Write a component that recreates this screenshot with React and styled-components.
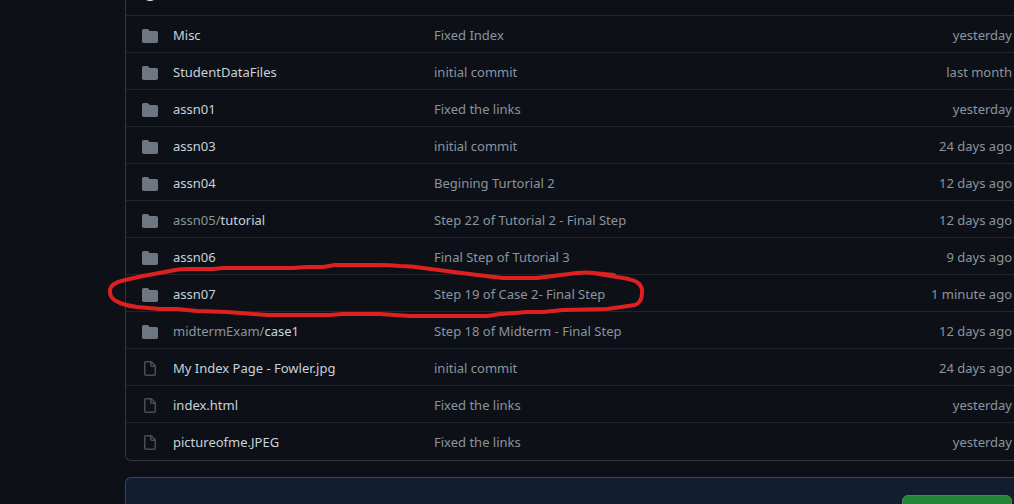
import React from "react";
import styled, { createGlobalStyle } from "styled-components";

const Global = createGlobalStyle`
  * { box-sizing: border-box; }
  body {
    margin: 0;
    background: #0d1117;
    color: #c9d1d9;
    font-family: "Segoe UI", "Noto Sans", "Open Sans", sans-serif;
    font-size: 13px;
    line-height: 20px;
  }
`;

const Page = styled.main`
  position: relative;
  display: flex;
  flex-direction: column;
  gap: 16px;
  height: 100vh;
  overflow: hidden;
  padding-left: 125px;
`;

const FileBox = styled.section`
  flex: none;
  padding-bottom: 1px;
  border: 1px solid #30363d;
  border-width: 0 0 1px 1px;
  border-bottom-left-radius: 6px;
`;

const CommitBar = styled.header`
  display: flex;
  align-items: flex-end;
  height: 15px;
  padding: 0 16px 14px;
`;

const Avatar = styled.span`
  flex: none;
  width: 16px;
  height: 16px;
  border-radius: 50%;
  background: #e6e8ea;
`;

const Table = styled.table`
  width: 100%;
  table-layout: fixed;
  border-collapse: separate;
  border-spacing: 0;
`;

const Cell = styled.td`
  height: 37px;
  padding: ${(p) => p.$pad || "2px 0 0"};
  width: ${(p) => p.$width || "auto"};
  border-top: 1px solid #21262d;
  color: #8b949e;
  text-align: ${(p) => p.$align || "left"};
  white-space: nowrap;
`;

const Icon = styled.svg`
  display: block;
  width: 16px;
  height: 16px;
  fill: ${(p) => p.$color};
`;

const NameLink = styled.a`
  color: #c9d1d9;
  text-decoration: none;
`;

const MessageLink = styled.a`
  color: #8b949e;
  text-decoration: none;
`;

const Parent = styled.span`
  color: #8b949e;
`;

const Banner = styled.section`
  flex: none;
  display: flex;
  justify-content: flex-end;
  padding: 17px 2px 17px 16px;
  border: 1px solid #264a7c;
  border-right: 0;
  border-top-left-radius: 6px;
  background: #121d2f;
`;

const GreenButton = styled.button`
  width: 110px;
  height: 32px;
  border: 1px solid #3a9249;
  border-radius: 6px;
  background: #238636;
`;

const Marker = styled.svg`
  position: absolute;
  left: 100px;
  top: 255px;
  width: 560px;
  height: 70px;
  fill: none;
  stroke: #df2020;
  stroke-width: 4;
  stroke-linecap: round;
  stroke-linejoin: round;
  pointer-events: none;
`;

const FOLDER =
  "M1.75 1A1.75 1.75 0 000 2.75v10.5C0 14.216.784 15 1.75 15h12.5A1.75 1.75 0 0016 13.25v-8.5A1.75 1.75 0 0014.25 3h-6.5a.25.25 0 01-.2-.1l-.9-1.2c-.33-.44-.85-.7-1.4-.7h-3.5z";
const FILE =
  "M3.75 1.5a.25.25 0 00-.25.25v11.5c0 .138.112.25.25.25h8.5a.25.25 0 00.25-.25V6H9.75A1.75 1.75 0 018 4.25V1.5H3.75zm5.75.56v2.19c0 .138.112.25.25.25h2.19L9.5 2.06zM2 1.75C2 .784 2.784 0 3.75 0h5.086c.464 0 .909.184 1.237.513l3.414 3.414c.329.328.513.773.513 1.237v8.086A1.75 1.75 0 0112.25 15h-8.5A1.75 1.75 0 012 13.25V1.75z";

const entries = [
  { name: "Misc", message: "Fixed Index", age: "yesterday" },
  { name: "StudentDataFiles", message: "initial commit", age: "last month" },
  { name: "assn01", message: "Fixed the links", age: "yesterday" },
  { name: "assn03", message: "initial commit", age: "24 days ago" },
  { name: "assn04", message: "Begining Turtorial 2", age: "12 days ago" },
  { parent: "assn05/", name: "tutorial", message: "Step 22 of Tutorial 2 - Final Step", age: "12 days ago" },
  { name: "assn06", message: "Final Step of Tutorial 3", age: "9 days ago" },
  { name: "assn07", message: "Step 19 of Case 2- Final Step", age: "1 minute ago" },
  { parent: "midtermExam/", name: "case1", message: "Step 18 of Midterm - Final Step", age: "12 days ago" },
  { file: true, name: "My Index Page - Fowler.jpg", message: "initial commit", age: "24 days ago" },
  { file: true, name: "index.html", message: "Fixed the links", age: "yesterday" },
  { file: true, name: "pictureofme.JPEG", message: "Fixed the links", age: "yesterday" },
];

function FileRow({ file, parent, name, message, age }) {
  return (
    <tr>
      <Cell $width="47px" $pad="4px 0 0 16px">
        <Icon viewBox="0 0 16 16" $color={file ? "#484f58" : "#6e7681"} aria-hidden="true">
          <path fillRule="evenodd" d={file ? FILE : FOLDER} />
        </Icon>
      </Cell>
      <Cell $width="261px">
        <NameLink href="#">
          {parent && <Parent>{parent}</Parent>}
          {name}
        </NameLink>
      </Cell>
      <Cell>
        <MessageLink href="#">{message}</MessageLink>
      </Cell>
      <Cell $width="120px" $pad="2px 2px 0 0" $align="right">
        {age}
      </Cell>
    </tr>
  );
}

export default function App() {
  return (
    <>
      <Global />
      <Page>
        <FileBox>
          <CommitBar>
            <Avatar />
          </CommitBar>
          <Table>
            <tbody>
              {entries.map((entry) => (
                <FileRow key={entry.name} {...entry} />
              ))}
            </tbody>
          </Table>
        </FileBox>
        <Banner>
          <GreenButton type="button" />
        </Banner>
        <Marker viewBox="100 255 560 70" aria-hidden="true">
          <path d="M614 275 L593 273 Q586 272 577 273 L537 278 H503 L477 275 L423 268 Q411 266 400 266 Q390 265 380 265 H335 L323 267 H307 L293 268 H223 L213 269 H187 Q178 269 170 271 L143 276 L125 280 Q111 283 110 290 Q109 299 120 303 Q128 306 137 307 L160 309 H177 L197 311 L227 312 L267 315 H330 L342 314 H380 L410 316 H487 L500 314 L527 312 H543 L563 310 L607 309 L635 305 Q642 302 642 293 Q643 285 635 281 Q627 278 617 277 L593 273" />
        </Marker>
      </Page>
    </>
  );
}
